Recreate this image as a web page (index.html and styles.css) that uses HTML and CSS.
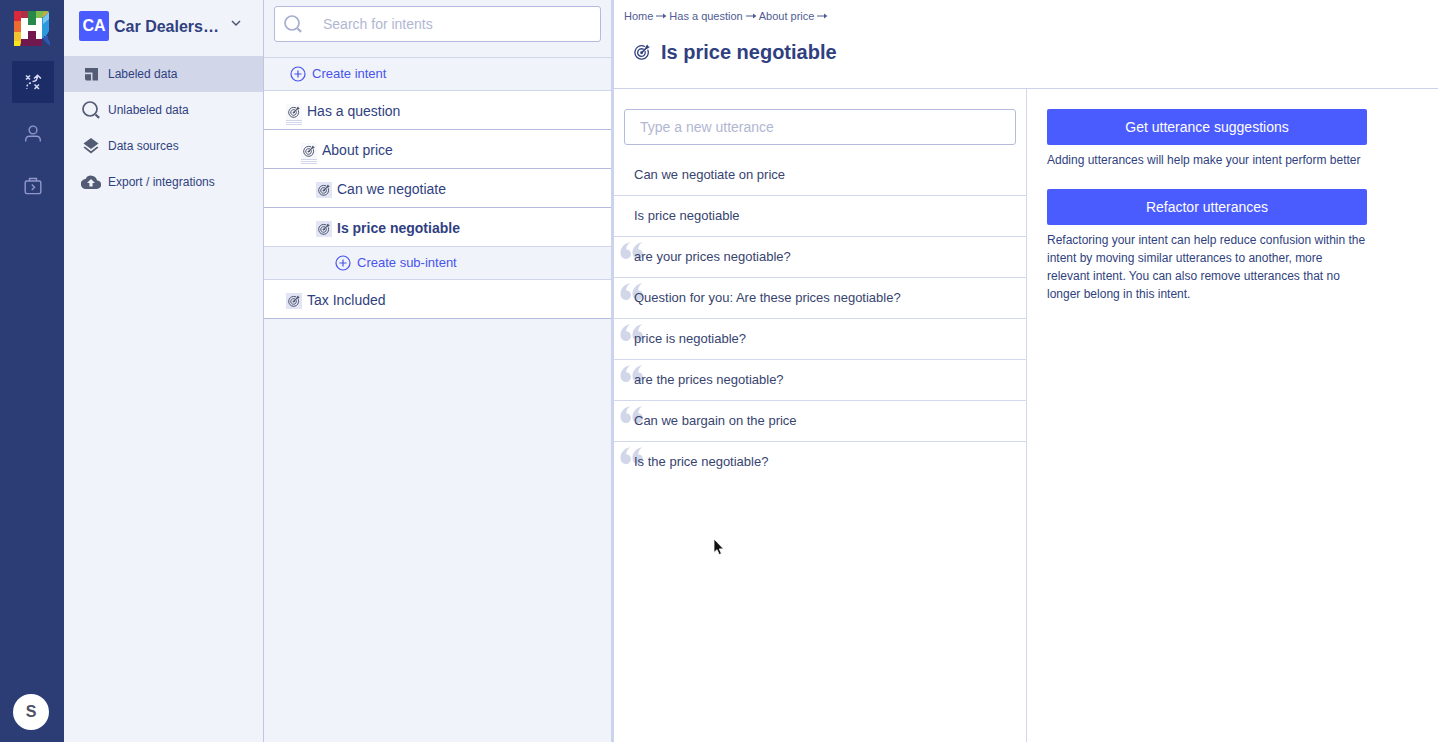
FILE: index.html
```html
<!DOCTYPE html>
<html lang="en">
<head>
<meta charset="utf-8">
<title>Is price negotiable</title>
<link rel="stylesheet" href="styles.css">
</head>
<body>
<svg class="defs" aria-hidden="true">
  <symbol id="target" viewBox="0 0 16 16">
    <g fill="none" stroke="currentColor" stroke-width="1.3" stroke-linecap="round">
      <path d="M10.300 2.300A6.700 6.700 0 1 0 13.900 6.200"/>
      <path d="M9.200 5.200A3.800 3.800 0 1 0 11.100 7.500"/>
      <path d="M7.600 8.700 12.600 3.600" stroke-width="1.500"/>
      <circle cx="7.600" cy="8.700" r=".800"/>
    </g>
    <path fill="currentColor" d="M11.700 4.600V2.300L13.600.500l.400 1.800 1.800.400L14 4.600Z"/>
  </symbol>
  <symbol id="plus" viewBox="0 0 16 16">
    <g fill="none" stroke="currentColor" stroke-width="1.2"><circle cx="8" cy="8" r="7"/><path d="M8 4.400v7.200M4.400 8h7.200"/></g>
  </symbol>
  <symbol id="magnifier" viewBox="0 0 20 20">
    <g fill="none" stroke="currentColor"><circle cx="9" cy="9" r="7" stroke-width="1.7"/><path d="m14.500 14.500 3.600 3.400" stroke-width="2.200"/></g>
  </symbol>
  <symbol id="arrow" viewBox="0 0 12 8">
    <path d="M1 4h9" fill="none" stroke="currentColor"/><path d="M8 1.600 11.400 4 8 6.400Z" fill="currentColor"/>
  </symbol>
  <symbol id="quote" viewBox="0 0 24 18">
    <path fill="currentColor" d="M10.500.300C7.800 1.700 6.300 4.200 6.200 7.500c2.700-.2 4.700 1.800 4.700 4.400 0 2.900-2.200 5-5 5-3.300 0-5.400-2.500-5.400-6.100C.5 5.700 4.200 1.200 10.500.3ZM22.500.3C19.800 1.700 18.300 4.200 18.200 7.500c2.700-.2 4.700 1.800 4.700 4.400 0 2.900-2.200 5-5 5-3.300 0-5.400-2.500-5.400-6.100C12.500 5.700 16.200 1.200 22.500.3Z"/>
  </symbol>
</svg>

<div class="app">
  <nav class="rail" aria-label="Main">
    <svg class="logo" viewBox="0 0 36 36" role="img" aria-label="Logo">
      <path fill="#d9293a" d="M0 0h8v10H0Z"/><path fill="#ac3148" d="M7 0h8v7H7Z"/>
      <path fill="#ee6b2f" d="M0 10h8v11H0Z"/>
      <path fill="#f4c430" d="M0 21h8v8l-2 6H0Z"/><path fill="#f7e51e" d="M0 30h6v5H0Z"/>
      <path fill="#28884a" d="M14 0h8v14h-8Z"/><path fill="#7cbd4b" d="M22 0h13l-7 7h-6Z"/>
      <path fill="#d7a63c" d="M30 1h5l-5 5h-2Z"/>
      <path fill="#2d9adf" d="m35 1-7 6v20h3l4-7Z"/><path fill="#7bc4ee" d="m35 1-6 6v6l6-5Z"/>
      <path fill="#2f58b5" d="M30 25h4v3l2 3v4l-7-7Z"/>
      <path fill="#71194f" d="M7 28h7v-9h8v9h6v7H7Z"/>
      <path fill="#fff" d="M7 7h7v7h8V7h6v21h-6v-8h-8v8H7Z"/>
    </svg>
    <div class="rail-items">
      <button class="rail-button active" aria-label="Train">
        <svg viewBox="0 0 20 20"><g fill="none" stroke="currentColor" stroke-width="1.500"><path d="m3 3.500 4 4m0-4-4 4M11.500 12.500l4.500 4.500m0-4.500L11.500 17M9.500 9.500c3.500 0 5-2 5-6M11 6.500l3.500-3.300L18 6.500"/><path stroke-dasharray="2 1.800" d="M8 11c-3 0-4.200 2-4.200 6"/></g></svg>
      </button>
      <button class="rail-button" aria-label="People">
        <svg viewBox="0 0 20 20"><g fill="none" stroke="currentColor" stroke-width="1.400"><circle cx="10" cy="6" r="3.900"/><path d="M2.700 17.500v-1.300c0-2.500 1.700-4 4-4h6.600c2.300 0 4 1.500 4 4v1.300"/></g></svg>
      </button>
      <button class="rail-button" aria-label="Workspace">
        <svg viewBox="0 0 20 20"><g fill="none" stroke="currentColor" stroke-width="1.400"><rect x="2.200" y="5" width="15.600" height="12.600" rx="1.500"/><path d="M6.500 5V2.500h7V5M8.800 8.600l2.700 2.700-2.700 2.700"/></g></svg>
      </button>
    </div>
    <button class="avatar">S</button>
  </nav>

  <aside class="sidebar">
    <button class="workspace">
      <span class="badge">CA</span><span class="workspace-name">Car Dealers…</span>
      <svg class="chevron" viewBox="0 0 10 10"><path d="m1 3 4 4 4-4" fill="none" stroke="currentColor" stroke-width="1.500"/></svg>
    </button>
    <a class="side-link current" href="#">
      <svg viewBox="0 0 20 20"><path fill="currentColor" d="M4 4h13v12.500h-5.500V8.500H4ZM4 10.200h6v6.300H5.200L4 15.300Z"/></svg>Labeled data</a>
    <a class="side-link" href="#"><svg viewBox="0 0 20 20"><use href="#magnifier"/></svg>Unlabeled data</a>
    <a class="side-link" href="#">
      <svg viewBox="0 0 20 20"><path fill="currentColor" d="m10 2 7.500 5.500L10 13 2.500 7.500ZM10 15.200l6.100-4.700 1.400 1.100-7.500 5.900-7.500-5.900 1.400-1.100Z"/></svg>Data sources</a>
    <a class="side-link" href="#">
      <svg viewBox="0 0 20 20"><path fill="currentColor" fill-rule="evenodd" d="M16.100 8.500A6.200 6.200 0 0 0 4.500 7 5 5 0 0 0 5 17h10.800a4.200 4.200 0 0 0 .3-8.500ZM11.600 11v3.500H8.400V11H6l4-4 4 4Z"/></svg>Export / integrations</a>
  </aside>

  <section class="intents" aria-label="Intents">
    <div class="search-area">
      <label class="search"><svg viewBox="0 0 20 20" aria-hidden="true"><use href="#magnifier"/></svg>
        <input type="search" placeholder="Search for intents" aria-label="Search for intents"></label>
    </div>
    <button class="create"><svg><use href="#plus"/></svg>Create intent</button>
    <a class="intent" href="#"><span class="chip stacked"><svg><use href="#target"/></svg></span>Has a question</a>
    <a class="intent level-2" href="#"><span class="chip stacked"><svg><use href="#target"/></svg></span>About price</a>
    <a class="intent level-3" href="#"><span class="chip"><svg><use href="#target"/></svg></span>Can we negotiate</a>
    <a class="intent level-3 selected" href="#"><span class="chip"><svg><use href="#target"/></svg></span>Is price negotiable</a>
    <button class="create sub"><svg><use href="#plus"/></svg>Create sub-intent</button>
    <a class="intent" href="#"><span class="chip"><svg><use href="#target"/></svg></span>Tax Included</a>
  </section>

  <main class="main">
    <header class="header">
      <nav class="crumbs" aria-label="Breadcrumb">
        <a href="#">Home</a><svg><use href="#arrow"/></svg><a href="#">Has a question</a><svg><use href="#arrow"/></svg><a href="#">About price</a><svg><use href="#arrow"/></svg>
      </nav>
      <h1 class="title"><svg><use href="#target"/></svg>Is price negotiable</h1>
    </header>
    <div class="columns">
      <section class="utterances">
        <div class="new-utterance"><input type="text" placeholder="Type a new utterance" aria-label="Type a new utterance"></div>
        <ul class="list">
          <li>Can we negotiate on price</li>
          <li>Is price negotiable</li>
          <li class="quoted"><svg><use href="#quote"/></svg><span>are your prices negotiable?</span></li>
          <li class="quoted"><svg><use href="#quote"/></svg><span>Question for you: Are these prices negotiable?</span></li>
          <li class="quoted"><svg><use href="#quote"/></svg><span>price is negotiable?</span></li>
          <li class="quoted"><svg><use href="#quote"/></svg><span>are the prices negotiable?</span></li>
          <li class="quoted"><svg><use href="#quote"/></svg><span>Can we bargain on the price</span></li>
          <li class="quoted"><svg><use href="#quote"/></svg><span>Is the price negotiable?</span></li>
        </ul>
      </section>
      <aside class="actions">
        <div class="action">
          <button class="primary">Get utterance suggestions</button>
          <p>Adding utterances will help make your intent perform better</p>
        </div>
        <div class="action">
          <button class="primary">Refactor utterances</button>
          <p>Refactoring your intent can help reduce confusion within the intent by moving similar utterances to another, more relevant intent. You can also remove utterances that no longer belong in this intent.</p>
        </div>
      </aside>
    </div>
  </main>
</div>
<svg class="pointer" viewBox="0 0 12 18" aria-hidden="true"><path d="M1 1v13.500l3-2.800 2.200 4.900 2.200-1-2.100-4.700h4.200Z" fill="#111" stroke="#fff" stroke-width=".8"/></svg>
</body>
</html>
```

FILE: styles.css
```css
* { box-sizing: border-box; }
body {
  margin: 0;
  font-family: "Liberation Sans", Arial, sans-serif;
  font-size: 14px;
  color: #303f80;
  background: #fff;
}
button, input { font: inherit; color: inherit; margin: 0; }
button { border: 0; padding: 0; background: none; cursor: pointer; }
a { color: inherit; text-decoration: none; }
svg { display: block; flex: none; }
.defs { position: absolute; width: 0; height: 0; }

.app { display: grid; grid-template-columns: 64px 200px 350px 1fr; min-height: 100vh; }

.rail {
  display: flex; flex-direction: column; align-items: center;
  padding: 11px 0 12px;
  background: #2b3d74;
}
.logo { width: 36px; height: 36px; }
.rail-items { display: flex; flex-direction: column; gap: 10px; margin: 14px 0 auto; padding-left: 2px; }
.rail-button { display: grid; place-items: center; width: 42px; height: 42px; color: #9197cb; }
.rail-button svg { width: 20px; height: 20px; }
.rail-button.active { background: #1c2c67; color: #d5d9f4; }
.avatar {
  width: 36px; height: 36px; margin-right: 2px; border-radius: 50%;
  background: #fff; color: #4d5263; font-size: 16px; font-weight: bold;
}

.sidebar { background: #f0f4fa; border-right: 1px solid #c0c6e0; }
.workspace {
  display: flex; align-items: center; gap: 5px;
  width: 100%; height: 56px; padding: 0 22px 4px 15px;
  font-size: 16px; font-weight: bold; text-align: left;
}
.badge {
  display: grid; place-items: center; width: 30px; height: 30px;
  border-radius: 2px; background: #4b5cff; color: #fff;
}
.workspace-name { flex: 1; padding-top: 2px; white-space: nowrap; }
.chevron { width: 10px; height: 10px; margin-bottom: 6px; color: #4d5575; }
.side-link {
  display: flex; align-items: center; gap: 7px;
  height: 36px; padding-left: 17px; font-size: 12px;
}
.side-link svg { width: 20px; height: 20px; color: #545b75; }
.side-link.current { background: #d1d6e9; }

.intents { background: #f0f4fa; border-right: 3px solid #ccd3ec; }
.search-area { padding: 6px 10px 15px; border-bottom: 1px solid #d0d6ea; }
.search {
  display: flex; align-items: center; gap: 18px;
  height: 36px; padding: 0 10px 0 8px;
  background: #fff; border: 1px solid #b4bbdd; border-radius: 3px;
}
.search svg { width: 20px; height: 20px; color: #a7afd0; }
.search input { flex: 1; min-width: 0; padding: 0 2px; border: 0; outline: 0; background: none; appearance: none; }
input::placeholder { color: #b1b7d2; opacity: 1; }
.create {
  display: flex; align-items: center; gap: 6px;
  width: 100%; height: 33px; padding: 0 0 1px 26px;
  border-bottom: 1px solid #d0d6ea; color: #4853ed; font-size: 13px;
}
.create svg { width: 16px; height: 16px; }
.create.sub { padding-left: 71px; }
.intent {
  display: flex; align-items: center; gap: 5px;
  height: 39px; padding: 1px 0 0 22px;
  background: #fff; border-bottom: 1px solid #b4bbdd;
}
.intent.level-2 { padding-left: 37px; }
.intent.level-3 { padding-left: 52px; }
.intent.selected { font-weight: bold; border-color: #d0d6ea; }
.chip { display: grid; place-items: center; width: 16px; height: 16px; margin-top: 2px; background: #e1e5f5; color: #4d536b; }
.chip svg { width: 12px; height: 12px; }
.chip.stacked { background: #f8f9fd; box-shadow: 0 1px #d0d6ea, 0 2px #fff, 0 3px #d0d6ea, 0 4px #fff, 0 5px #d0d6ea; }

.header { height: 89px; padding: 9px 10px 0; border-bottom: 1px solid #cdd2ec; }
.crumbs { display: flex; align-items: center; gap: 2px; font-size: 11px; line-height: 14px; color: #505c94; }
.crumbs svg { width: 12px; height: 8px; }
.title {
  display: flex; align-items: center; gap: 11px;
  margin: 17px 0 0; padding-left: 10px;
  font-size: 20px; line-height: 24px;
}
.title svg { width: 16px; height: 16px; }
.main { display: flex; flex-direction: column; }
.columns { flex: 1; display: grid; grid-template-columns: 413fr 411fr; }
.utterances { border-right: 1px solid #d4d8ed; }
.new-utterance { padding: 20px 10px 10px; }
.new-utterance input {
  display: block; width: 100%; height: 36px; padding: 0 15px;
  background: #fff; border: 1px solid #b4bbdd; border-radius: 3px;
}
.list { margin: 0; padding: 0; list-style: none; font-size: 13px; color: #37446f; }
.list li { position: relative; display: flex; align-items: center; height: 41px; padding: 0 0 2px 20px; border-bottom: 1px solid #d4d8ed; }
.list li:last-child { border-bottom-color: transparent; }
.quoted svg { position: absolute; left: 6px; top: 5px; width: 24px; height: 18px; color: #d1d6e9; }
.quoted span { position: relative; }
.actions { padding: 20px; }
.action { max-width: 320px; margin-bottom: 20px; }
.primary { display: block; width: 100%; height: 36px; border-radius: 2px; background: #4b5cff; color: #fff; font-size: 14px; }
.action p { margin: 6px 0 0; font-size: 12px; line-height: 18px; }

.pointer { position: absolute; left: 713px; top: 538px; width: 12px; height: 18px; }
```
